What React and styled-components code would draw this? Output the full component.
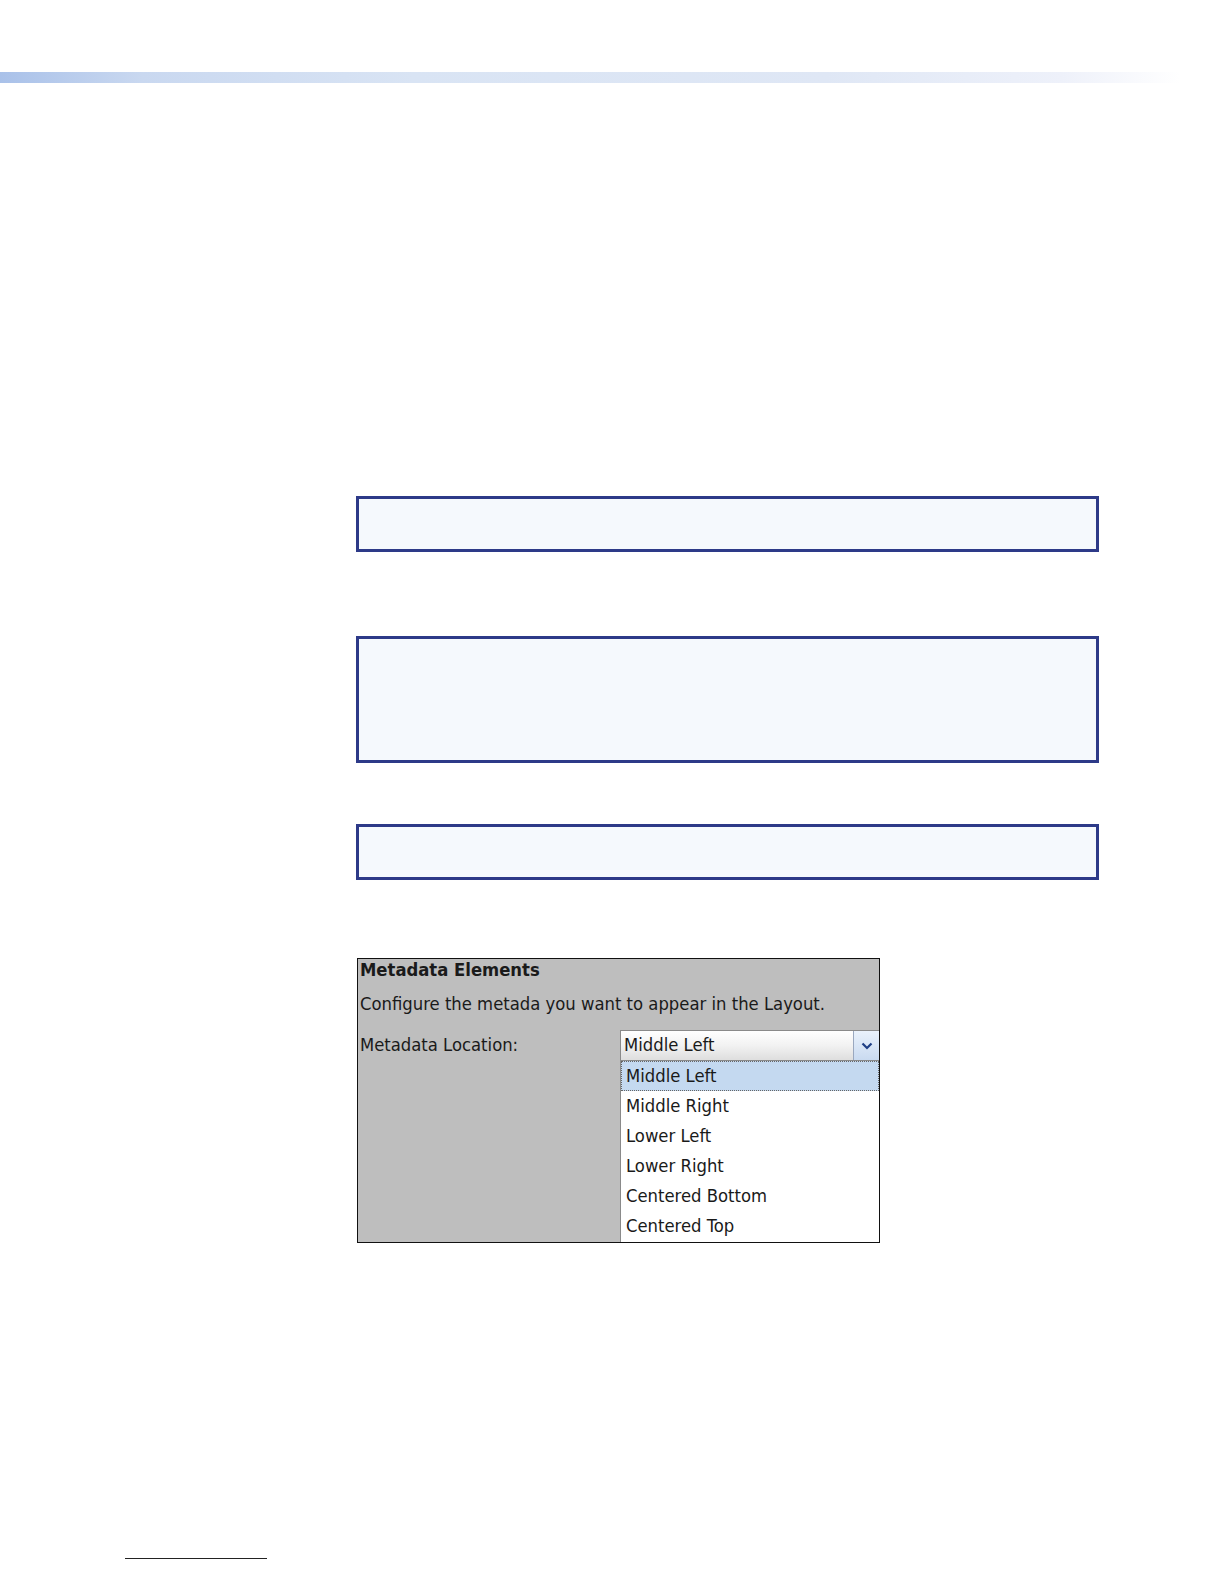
import styled, { createGlobalStyle } from "styled-components"

const GlobalStyle = createGlobalStyle`
  html, body {
    margin: 0;
    padding: 0;
    background: #ffffff;
  }
  body {
    font-family: "DejaVu Sans Condensed", "DejaVu Sans", sans-serif;
  }
`

const locations = [
  "Middle Left",
  "Middle Right",
  "Lower Left",
  "Lower Right",
  "Centered Bottom",
  "Centered Top",
]

const App = () => {
  return (
    <>
      <GlobalStyle />
      <Page>
        <HeaderBar />
        <Content>
          <NoteBox $height={56} $top={413} />
          <NoteBox $height={127} $top={84} />
          <NoteBox $height={56} $top={61} />

          <Panel>
            <PanelTitle>Metadata Elements</PanelTitle>
            <PanelText>Configure the metada you want to appear in the Layout.</PanelText>
            <FieldRow>
              <FieldLabel>Metadata Location:</FieldLabel>
              <SelectColumn>
                <SelectBox>
                  <SelectValue>Middle Left</SelectValue>
                  <ArrowButton>
                    <svg width="12" height="8" viewBox="0 0 12 8">
                      <path d="M1.5 1.5 L6 6 L10.5 1.5" fill="none" stroke="#1f3f86" strokeWidth="2.2" />
                    </svg>
                  </ArrowButton>
                </SelectBox>
                <OptionList>
                  {locations.map((name, i) => (
                    <OptionItem key={name} $selected={i === 0}>
                      {name}
                    </OptionItem>
                  ))}
                </OptionList>
              </SelectColumn>
            </FieldRow>
          </Panel>
        </Content>
        <FooterRule />
      </Page>
    </>
  )
}

const Page = styled.div`
  width: 1224px;
  height: 1584px;
  position: relative;
  padding-top: 72px;
  box-sizing: border-box;
  overflow: hidden;
`

const HeaderBar = styled.div`
  width: 1180px;
  height: 11px;
  background: linear-gradient(
    to right,
    #a9c1e9 0%,
    #c9d8f0 12%,
    #d9e4f4 35%,
    #dfe7f5 70%,
    #eef1fa 90%,
    #ffffff 100%
  );
`

const Content = styled.div`
  margin-left: 356px;
  width: 743px;
  display: flex;
  flex-direction: column;
`

const NoteBox = styled.div`
  margin-top: ${(p) => p.$top}px;
  height: ${(p) => p.$height}px;
  border: 3px solid #2d3a88;
  background: #f5f9fd;
  box-sizing: border-box;
`

const Panel = styled.div`
  margin-top: 78px;
  margin-left: 1px;
  width: 523px;
  background: #bebebe;
  border: 1px solid #111;
  box-sizing: border-box;
  color: #1a1a1a;
  font-size: 18.3px;
`

const PanelTitle = styled.div`
  font-weight: bold;
  padding: 0 0 0 2px;
  height: 24px;
`

const PanelText = styled.div`
  padding: 10px 0 0 2px;
  height: 30px;
`

const FieldRow = styled.div`
  display: grid;
  grid-template-columns: 262px 1fr;
  margin-top: 7px;
`

const FieldLabel = styled.div`
  padding: 4px 0 0 2px;
`

const SelectColumn = styled.div`
  display: flex;
  flex-direction: column;
`

const SelectBox = styled.div`
  height: 31px;
  display: flex;
  border: 1px solid #8a8a8a;
  border-right: none;
  background: linear-gradient(to bottom, #ffffff 0%, #f2f2f2 50%, #dedede 100%);
  box-sizing: border-box;
`

const SelectValue = styled.div`
  flex: 1;
  padding: 3px 0 0 3px;
`

const ArrowButton = styled.div`
  width: 25px;
  display: flex;
  align-items: center;
  justify-content: center;
  border-left: 1px solid #9aa8bf;
  background: linear-gradient(to bottom, #eaf2fc 0%, #c9daf0 100%);
`

const OptionList = styled.div`
  background: #ffffff;
  border-left: 1px solid #8a8a8a;
  display: flex;
  flex-direction: column;
  padding-bottom: 1px;
`

const OptionItem = styled.div`
  height: 30px;
  line-height: 28px;
  padding-left: 4px;
  box-sizing: border-box;
  border: 1px dotted ${(p) => (p.$selected ? "#666" : "transparent")};
  background: ${(p) => (p.$selected ? "#c4d9f0" : "#ffffff")};
`

const FooterRule = styled.div`
  position: absolute;
  left: 125px;
  top: 1558px;
  width: 142px;
  height: 1px;
  background: #222;
`

export default App
